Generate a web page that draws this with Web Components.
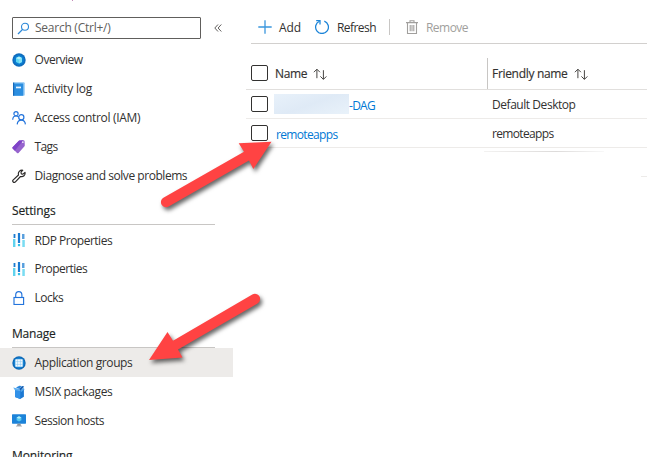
<!DOCTYPE html>
<html lang="en">
<head>
<meta charset="utf-8">
<title>Application groups</title>
<style>
html, body { margin: 0; background: #fff; }
body { width: 647px; height: 457px; overflow: hidden; }
</style>
</head>
<body>
<azure-page></azure-page>

<script>
const ICONS = {
  search: '<path d="M1 13 5.6 8.4" stroke="#2b88d8" stroke-width="1.3"/><circle cx="8" cy="5.8" r="3.5" fill="none" stroke="#2b88d8" stroke-width="1.1"/>',
  overview: '<circle cx="7" cy="7" r="6.7" fill="#0f6cbd"/><circle cx="7" cy="7" r="5" fill="#0a7fd4"/><path d="M7 3.6 10 5v4L7 10.5 4 9V5z" fill="#5fd6f2"/><path d="M7 3.6 10 5 7 6.5 4 5z" fill="#b4f2fb"/><path d="M7 6.5 10 5v4L7 10.5z" fill="#83e2f6"/>',
  log: '<rect x="1" y="0.3" width="11.7" height="13.4" rx="1" fill="#8cc6f4"/><rect x="1" y="1.4" width="10.2" height="12.3" rx=".6" fill="#2b8ee0"/><rect x="1" y="0.6" width="1.2" height="13" fill="#1668b8"/><rect x="4" y="4.6" width="5" height="1.7" fill="#eaf5ff"/>',
  people: '<g fill="none" stroke="#2374dc" stroke-width="1.2"><circle cx="4" cy="2.7" r="2.1"/><path d="M.7 8.8C.8 6.4 2.2 5 4 5c1 0 1.8.3 2.4.9"/><circle cx="9.3" cy="6.3" r="2.6"/><path d="M5.2 13.4C5.4 10.8 7 9.1 9.3 9.1s3.9 1.7 4.1 4.3"/></g>',
  tag: '<path d="M.6 7.3 6.6.9C7 .5 7.4.4 7.9.4L11.4.2c.7 0 1.1.4 1.2 1l.2 4c0 .5-.2.9-.5 1.3L6.5 12.9c-.5.5-1 .5-1.5 0L.6 8.6c-.4-.5-.4-.9 0-1.3z" fill="#9664cd"/><path d="M.6 7.3 6.6.9C7 .5 7.4.4 7.9.4L11.4.2 2.8 10.7.6 8.6c-.4-.5-.4-.9 0-1.3z" fill="#7f43c8"/><circle cx="10.8" cy="2.2" r=".9" fill="#eadcf8"/>',
  wrench: '<path d="M1 11.1 6.5 6C5.7 3 8 .8 10.8 1.2L9 3.2l.3 1.7 1.7.3 2-1.9c.6 2.9-1.8 5-4.5 4.2l-5.3 5.6c-1.3 1-3.2-.7-2.2-2z" fill="none" stroke="#2b2928" stroke-width="1.15" stroke-linejoin="round"/>',
  bars: '<rect x="1" y="1" width="1" height="4" fill="#9cc8ea"/><rect x="2" y="1" width="1.4" height="4" fill="#1a7bd2"/><rect x="1" y="6" width="2.4" height="8" fill="#5fd3ee"/><rect x="5.9" y="0" width="2.2" height="10" fill="#1a7bd2"/><rect x="5.9" y="11" width="2.2" height="2.2" fill="#32bfe6"/><rect x="10.3" y="1" width="1.5" height="5" fill="#1a7bd2"/><rect x="11.8" y="1" width="1" height="5" fill="#9cc8ea"/><rect x="10.3" y="7" width="2.5" height="7" fill="#7adcf2"/>',
  lock: '<g fill="none" stroke="#2374dc" stroke-width="1.15"><rect x="2" y="6.5" width="9.6" height="7"/><path d="M3.7 6.5V4.1C3.7 2 5 .6 6.8.6s3.1 1.4 3.1 3.5v2.4"/></g>',
  grid: '<circle cx="7" cy="7" r="6.7" fill="#0f69b6"/><circle cx="7" cy="7" r="5.4" fill="#1683d4"/><rect x="3.3" y="3.3" width="7.4" height="7.4" rx=".5" fill="#f2faff"/><path d="M5.6 3.3v7.4M8.4 3.3v7.4M3.3 5.6h7.4M3.3 8.4h7.4" stroke="#7fc0ef" stroke-width=".5"/>',
  box: '<path d="M3 4.6 8.4 5.8 11.9 3.8v7.9L8.2 14 3 12z" fill="#1c78d2"/><path d="M3 4.6 8.4 5.8 8.2 14 3 12z" fill="#3291e8"/><path d="M1.2 2.4 7 3.8 8.6 6 2.8 4.9z" fill="#5fb0f2"/><path d="M7 3.8 10.2 1 12.2 1.4 8.6 6z" fill="#1560b4"/><path d="M8.5 5.8 11.6 3l1 1.2-3.4 2.7z" fill="#4fa5ec"/><path d="M4 2.6 7.4.7l2.5.4L7 3.8z" fill="#2b86dc"/>',
  monitor: '<rect x="0" y=".3" width="14" height="9.4" rx=".6" fill="#1c83d9"/><path d="M5.4 9.7h3.2l.4 2.3H5z" fill="#8e9297"/><rect x="4" y="11.6" width="6" height="1" fill="#b6babe"/><path d="M7 2.2 9.4 3.5v2.8L7 7.6 4.6 6.3V3.5z" fill="#58c9ef"/><path d="M7 2.2 9.4 3.5 7 4.8 4.6 3.5z" fill="#b4effb"/>',
  collapse: '<path d="M7 3.5 3.8 7 7 10.5M10.3 3.5 7.1 7l3.2 3.5" fill="none" stroke="#605e5c" stroke-width="1"/>',
  plus: '<path d="M0.3 7H13.7M7 .3v13.4" stroke="#3a96dd" stroke-width="1.3"/>',
  refresh: '<path d="M9.3 1.1A6.4 6.4 0 1 1 4.5 1.2" fill="none" stroke="#1b84d8" stroke-width="1.25"/><path d="M1.2.7H5V4.5" fill="none" stroke="#1b84d8" stroke-width="1.25"/>',
  trash: '<path d="M1 2.6h12M5 2.4V.7h4v1.7M2.5 2.8v10.7h9V2.8M5.2 5v6.3M7 5v6.3M8.8 5v6.3" fill="none" stroke="#a19f9d" stroke-width="1.1"/>',
  sort: '<path d="M3.9 11.2V2.3M.9 5.2l3-3 3 3M10.4 3.2v9M7.4 9.4l3 3 3-3" fill="none" stroke="#484644" stroke-width="1"/>'
};

class UiIcon extends HTMLElement {
  connectedCallback() {
    const s = this.getAttribute('size') || 14;
    this.attachShadow({ mode: 'open' }).innerHTML =
      `<style>:host{display:block;flex:none;width:${s}px;height:${s}px}svg{display:block}</style>
       <svg width="${s}" height="${s}" viewBox="0 0 14 14">${ICONS[this.getAttribute('name')]}</svg>`;
  }
}
customElements.define('ui-icon', UiIcon);

/* Single-line label whose tracking adapts to the width it is given. */
class UiText extends HTMLElement {
  connectedCallback() {
    const w = +this.getAttribute('w');
    this.attachShadow({ mode: 'open' }).innerHTML =
      `<style>:host{display:block;flex:none;width:${w}px;white-space:nowrap;line-height:18px}span{display:inline-block}</style><span></span>`;
    const span = this.shadowRoot.querySelector('span');
    span.textContent = this.getAttribute('label');
    const n = span.textContent.length;
    span.style.letterSpacing = ((w - span.getBoundingClientRect().width) / n).toFixed(3) + 'px';
  }
}
customElements.define('ui-text', UiText);

class NavItem extends HTMLElement {
  connectedCallback() {
    this.attachShadow({ mode: 'open' }).innerHTML =
      `<style>:host{display:flex;align-items:center;box-sizing:border-box;gap:8.6px;padding-left:12px;height:${this.getAttribute('h') || 29}px}
       :host([selected]){background:#edebe9}
       :host([low]) ui-text{padding-top:1px}</style>
       <ui-icon name="${this.getAttribute('icon')}"></ui-icon><ui-text label="${this.getAttribute('label')}" w="${this.getAttribute('w')}"></ui-text>`;
  }
}
customElements.define('nav-item', NavItem);

class NavHeading extends HTMLElement {
  connectedCallback() {
    this.attachShadow({ mode: 'open' }).innerHTML =
      `<style>:host{display:block;box-sizing:border-box;height:35px;margin:0 18px 0 12px;padding-top:12px;border-bottom:1px solid #c8c6c4;font-weight:500;color:#201f1e;-webkit-text-stroke:.15px #201f1e}</style>
       <ui-text label="${this.getAttribute('label')}" w="${this.getAttribute('w')}"></ui-text>`;
  }
}
customElements.define('nav-heading', NavHeading);

class SideNav extends HTMLElement {
  connectedCallback() {
    this.attachShadow({ mode: 'open' }).innerHTML = `
      <style>
        :host{display:block;width:233px;height:457px;flex:none;overflow:hidden}
        .top{display:flex;align-items:center;height:22px;padding:17px 0 6px 12px}
        .search{display:flex;align-items:center;box-sizing:border-box;width:189px;height:22px;border:1px solid #605e5c;border-radius:1px;padding-left:4px;gap:4px;color:#605e5c}
        .top > ui-icon{margin-left:10px}
      </style>
      <div class="top"><div class="search"><ui-icon name="search"></ui-icon><ui-text label="Search (Ctrl+/)" w="75.5"></ui-text></div><ui-icon name="collapse"></ui-icon></div>
      <nav-item icon="overview" label="Overview" w="48"></nav-item>
      <nav-item icon="log" label="Activity log" w="57.5"></nav-item>
      <nav-item icon="people" label="Access control (IAM)" w="105.5"></nav-item>
      <nav-item icon="tag" label="Tags" w="23"></nav-item>
      <nav-item icon="wrench" label="Diagnose and solve problems" w="152.5"></nav-item>
      <nav-heading label="Settings" w="43.5"></nav-heading>
      <nav-item low icon="bars" label="RDP Properties" w="77.5" h="30"></nav-item>
      <nav-item icon="bars" label="Properties" w="52.5" h="28"></nav-item>
      <nav-item icon="lock" label="Locks" w="28.5" h="30"></nav-item>
      <nav-heading label="Manage" w="43.5"></nav-heading>
      <nav-item selected icon="grid" label="Application groups" w="97.8"></nav-item>
      <nav-item icon="box" label="MSIX packages" w="77.8"></nav-item>
      <nav-item icon="monitor" label="Session hosts" w="69.5"></nav-item>
      <nav-heading label="Monitoring" w="60.5"></nav-heading>`;
  }
}
customElements.define('side-nav', SideNav);

class ToolBar extends HTMLElement {
  connectedCallback() {
    this.attachShadow({ mode: 'open' }).innerHTML = `
      <style>
        :host{display:flex;align-items:center;box-sizing:border-box;height:44px;margin-left:5px;padding:11px 0 0 7px;border-bottom:1px solid #d2d0ce}
        .sep{width:1px;height:16px;background:#c8c6c4;margin:0 15px 0 13px}
        ui-text{padding-top:1px}
        .off{color:#a19f9d}
      </style>
      <ui-icon name="plus"></ui-icon><ui-text style="margin-left:7px" label="Add" w="22"></ui-text>
      <ui-icon style="margin-left:14px" name="refresh"></ui-icon><ui-text style="margin-left:8px" label="Refresh" w="39"></ui-text>
      <div class="sep"></div>
      <ui-icon name="trash"></ui-icon><ui-text class="off" style="margin-left:7px" label="Remove" w="42"></ui-text>`;
  }
}
customElements.define('tool-bar', ToolBar);

class CheckBox extends HTMLElement {
  connectedCallback() {
    this.attachShadow({ mode: 'open' }).innerHTML =
      `<style>:host{display:block;flex:none;box-sizing:border-box;width:17px;height:16px;border:1px solid #323130;border-radius:2px;background:#fff}</style>`;
  }
}
customElements.define('check-box', CheckBox);

class GridRow extends HTMLElement {
  connectedCallback() {
    this.attachShadow({ mode: 'open' }).innerHTML = `
      <style>
        :host{display:grid;grid-template-columns:241px 1fr;box-sizing:border-box;height:29px;border-bottom:1px solid #edebe9}
        :host([head]){height:32px;border-color:#e1dfdd;font-weight:500;-webkit-text-stroke:.15px currentColor}
        .c{display:flex;align-items:center;padding-left:5px}
        .b{padding-top:1px}
        :host([head]) .b{border-left:1px solid #c8c6c4;padding-left:4px}
        check-box{margin-right:7px}
        :host([head]) check-box{margin-bottom:1px}
      </style>
      <div class="c"><check-box></check-box><slot name="name"></slot></div>
      <div class="c b"><slot></slot></div>`;
  }
}
customElements.define('grid-row', GridRow);

class RedArrows extends HTMLElement {
  connectedCallback() {
    this.attachShadow({ mode: 'open' }).innerHTML = `
      <style>:host{position:absolute;left:0;top:0;pointer-events:none}svg{display:block;filter:drop-shadow(2px 3px 2px rgba(0,0,0,.6))}</style>
      <svg width="647" height="457" fill="#ff4343">
        <path d="M271.5 141.7 253.3 169 249 160.5 168.7 206.5A5.1 5.1 0 0 1 163.4 197.7L244 151.7 238.7 143.3Z"/>
        <path d="M149 360 167.5 332 173 340.8 252.3 294.6A5.1 5.1 0 0 1 257.6 303.4L178 349.5 182.5 357.6Z"/>
      </svg>`;
  }
}
customElements.define('red-arrows', RedArrows);

class AzurePage extends HTMLElement {
  connectedCallback() {
    this.attachShadow({ mode: 'open' }).innerHTML = `
      <style>
        :host{display:flex;position:relative;width:647px;height:457px;overflow:hidden;font:12px "Open Sans","Noto Sans",sans-serif;color:#323130;background:#fff}
        main{flex:1;margin-left:13px}
        .grid{padding-top:14px}
        .n{display:flex;align-items:center;color:#0078d4}
        .h{display:flex;align-items:center;gap:6px}
        .mask{width:75px;height:20px;background:linear-gradient(160deg,#e8f1fa,#dfeaf6 50%,#e9f2fa)}
        .f1{height:1px;width:120px;margin:3px 0 0 238px;background:linear-gradient(90deg,#f3f2f1,#dddbda 60%,#f8f8f8)}
        .f2{height:1px;margin:24px 0 0 395px;background:#edebe9}
        .trace{position:absolute;left:72px;top:0;width:1px;height:1px;background:#c58bb8}
      </style>
      <side-nav></side-nav>
      <main>
        <tool-bar></tool-bar>
        <div class="grid">
          <grid-row head><div slot="name" class="h"><ui-text label="Name" w="32"></ui-text><ui-icon name="sort"></ui-icon></div>
            <div class="h"><ui-text label="Friendly name" w="75.5"></ui-text><ui-icon name="sort"></ui-icon></div></grid-row>
          <grid-row><div slot="name" class="n" style="margin-left:-1px"><div class="mask"></div><ui-text label="-DAG" w="26" style="padding-top:3px"></ui-text></div>
            <ui-text label="Default Desktop" w="83.5"></ui-text></grid-row>
          <grid-row><div slot="name" class="n" style="margin-left:1px"><ui-text label="remoteapps" w="61.5" style="padding-top:3px"></ui-text></div>
            <ui-text label="remoteapps" w="61.5" style="padding-top:1px"></ui-text></grid-row>
        </div>
        <div class="f1"></div>
        <div class="f2"></div>
      </main>
      <div class="trace"></div>
      <red-arrows></red-arrows>`;
  }
}
customElements.define('azure-page', AzurePage);
</script>
</body>
</html>
